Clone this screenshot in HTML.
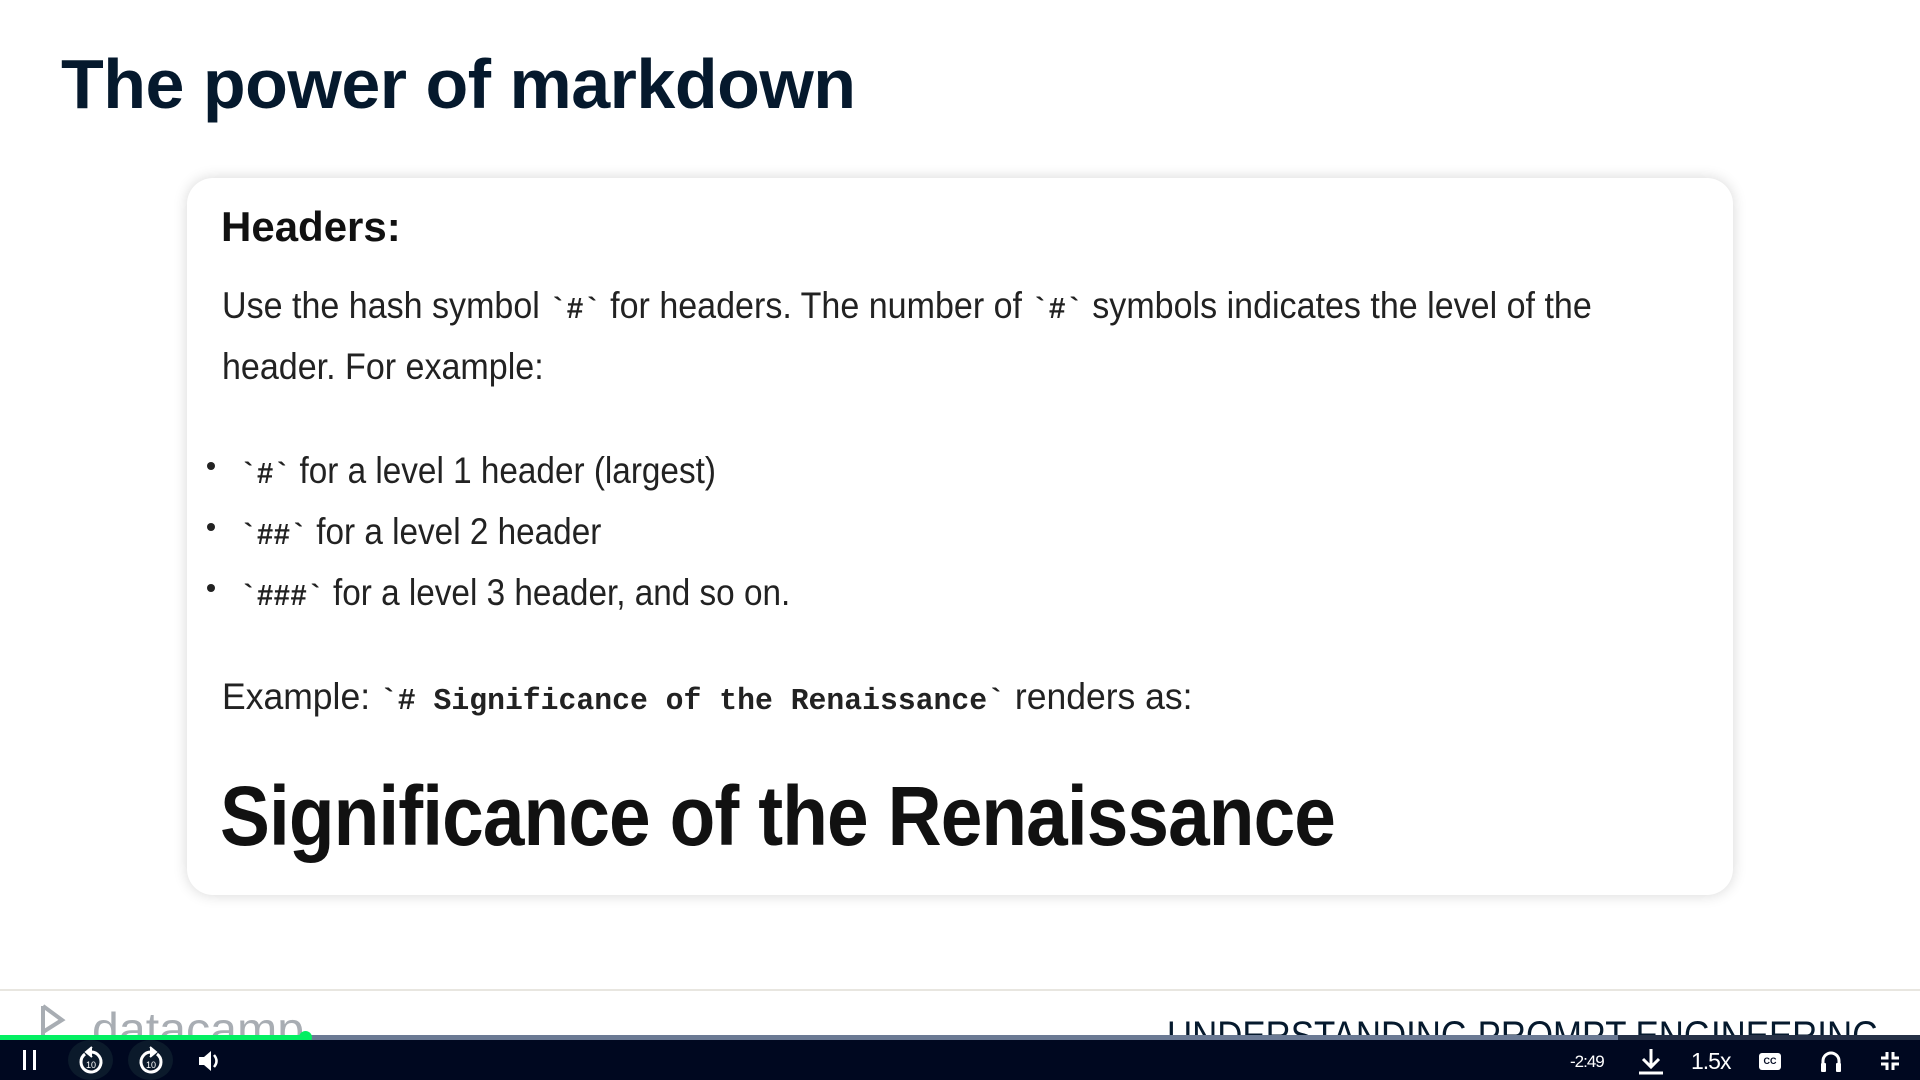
<!DOCTYPE html>
<html><head><meta charset="utf-8"><style>
*{margin:0;padding:0;box-sizing:border-box}
body{width:1920px;height:1080px;background:#fff;position:relative;overflow:hidden;font-family:"Liberation Sans",sans-serif;color:#1a1a1a}
.a{position:absolute;white-space:nowrap;transform-origin:0 0}
h1{position:absolute;left:61px;top:44px;font-size:70px;font-weight:bold;color:#05192d;letter-spacing:-0.5px;white-space:nowrap}
.card{position:absolute;left:187px;top:178px;width:1546px;height:717px;border-radius:26px;background:#fff;box-shadow:0 0 14px rgba(0,0,0,.16)}
.p{font-size:37px;color:#222;transform:scaleX(.92)}
code{font-family:"Liberation Mono",monospace;font-weight:bold;font-size:31px}
.dot{position:absolute;width:8px;height:8px;border-radius:50%;background:#222}
.bar{position:absolute;left:0;top:1040px;width:1920px;height:40px;background:#000820}
.ic{position:absolute;fill:none;stroke:#fff;stroke-width:3}
</style></head><body>
<h1>The power of markdown</h1>
<div class="card"></div>
<div class="a" style="left:221px;top:203px;font-size:42px;font-weight:bold;color:#111;transform:scaleX(1)">Headers:</div>
<div class="a p" style="left:222px;top:285px">Use the hash symbol <code>`#`</code> for headers. The number of <code>`#`</code> symbols indicates the level of the</div>
<div class="a p" style="left:222px;top:346px">header. For example:</div>
<div class="dot" style="left:207px;top:462px"></div>
<div class="dot" style="left:207px;top:523px"></div>
<div class="dot" style="left:207px;top:584px"></div>
<div class="a p" style="left:240px;top:450px;transform:scaleX(.9)"><code>`#`</code> for a level 1 header (largest)</div>
<div class="a p" style="left:240px;top:511px;transform:scaleX(.9)"><code>`##`</code> for a level 2 header</div>
<div class="a p" style="left:240px;top:572px;transform:scaleX(.9)"><code>`###`</code> for a level 3 header, and so on.</div>
<div class="a p" style="left:222px;top:676px;transform:scaleX(.96)">Example: <code>`# Significance of the Renaissance`</code> renders as:</div>
<div class="a" style="left:220px;top:768px;font-size:84px;font-weight:bold;color:#111;transform:scaleX(.89);letter-spacing:-1px">Significance of the Renaissance</div>
<div style="position:absolute;left:0;top:989px;width:1920px;height:2px;background:#e8e6e0"></div>
<svg style="position:absolute;left:40px;top:1004px" width="40" height="36"><path d="M3 2V34M3 2L22 16L3 28" fill="none" stroke="#a8adb3" stroke-width="4"/></svg>
<div class="a" style="left:92px;top:1002px;font-size:46px;color:#a8adb3;transform:scaleX(1.05)">datacamp</div>
<div class="a" style="left:1167px;top:1014px;font-size:40px;color:#05192d;transform:scaleX(.87)">UNDERSTANDING PROMPT ENGINEERING</div>
<div style="position:absolute;left:0;top:1035px;width:1920px;height:5px;background:#253046"></div>
<div style="position:absolute;left:0;top:1035px;width:1618px;height:5px;background:#6b7a94"></div>
<div style="position:absolute;left:0;top:1035px;width:306px;height:5px;background:#03ef62"></div>
<div style="position:absolute;left:299px;top:1031px;width:13px;height:13px;border-radius:50%;background:#03ef62"></div>
<div class="bar"></div>
<div style="position:absolute;left:23px;top:1050px;width:3px;height:20px;background:#fff"></div>
<div style="position:absolute;left:33px;top:1050px;width:3px;height:20px;background:#fff"></div>
<div style="position:absolute;left:68px;top:1040px;width:45px;height:40px;border-radius:50%;background:#0b1a2b"></div>
<div style="position:absolute;left:128px;top:1040px;width:45px;height:40px;border-radius:50%;background:#0b1a2b"></div>
<svg class="ic" style="left:76px;top:1044px" width="30" height="34"><path d="M9 10A10 10 0 1 0 15 8" /><path d="M16 3L10 8L16 13" fill="#fff" stroke-width="2"/><text x="10" y="24" font-size="9" fill="#fff" stroke="none" font-family="Liberation Sans">10</text></svg>
<svg class="ic" style="left:136px;top:1044px" width="30" height="34"><path d="M21 10A10 10 0 1 1 15 8" /><path d="M14 3L20 8L14 13" fill="#fff" stroke-width="2"/><text x="10" y="24" font-size="9" fill="#fff" stroke="none" font-family="Liberation Sans">10</text></svg>
<svg style="position:absolute;left:198px;top:1050px" width="24" height="22"><path d="M1 7H6L13 1V21L6 15H1Z" fill="#fff"/><path d="M16 5Q21 11 16 17" fill="none" stroke="#fff" stroke-width="2.5"/></svg>
<div class="a" style="left:1570px;top:1052px;font-size:17px;color:#fff;letter-spacing:-1px">-2:49</div>
<svg style="position:absolute;left:1637px;top:1047px" width="28" height="28"><path d="M14 2V20M6 12L14 20L22 12" fill="none" stroke="#fff" stroke-width="3"/><path d="M2 26H26" stroke="#fff" stroke-width="3"/></svg>
<div class="a" style="left:1691px;top:1048px;font-size:23px;color:#fff;letter-spacing:-1px">1.5x</div>
<div style="position:absolute;left:1759px;top:1053px;width:22px;height:17px;border-radius:3px;background:#fff;font-size:9px;font-weight:bold;color:#000820;text-align:center;line-height:17px">CC</div>
<svg style="position:absolute;left:1819px;top:1048px" width="24" height="26"><path d="M4 22V13A8 8 0 0 1 20 13V22" fill="none" stroke="#fff" stroke-width="3"/><rect x="2" y="15" width="5" height="9" rx="1" fill="#fff"/><rect x="17" y="15" width="5" height="9" rx="1" fill="#fff"/></svg>
<svg style="position:absolute;left:1881px;top:1052px" width="18" height="18"><path d="M6 0V6H0M12 0V6H18M6 18V12H0M12 18V12H18" fill="none" stroke="#fff" stroke-width="3"/></svg>
</body></html>
